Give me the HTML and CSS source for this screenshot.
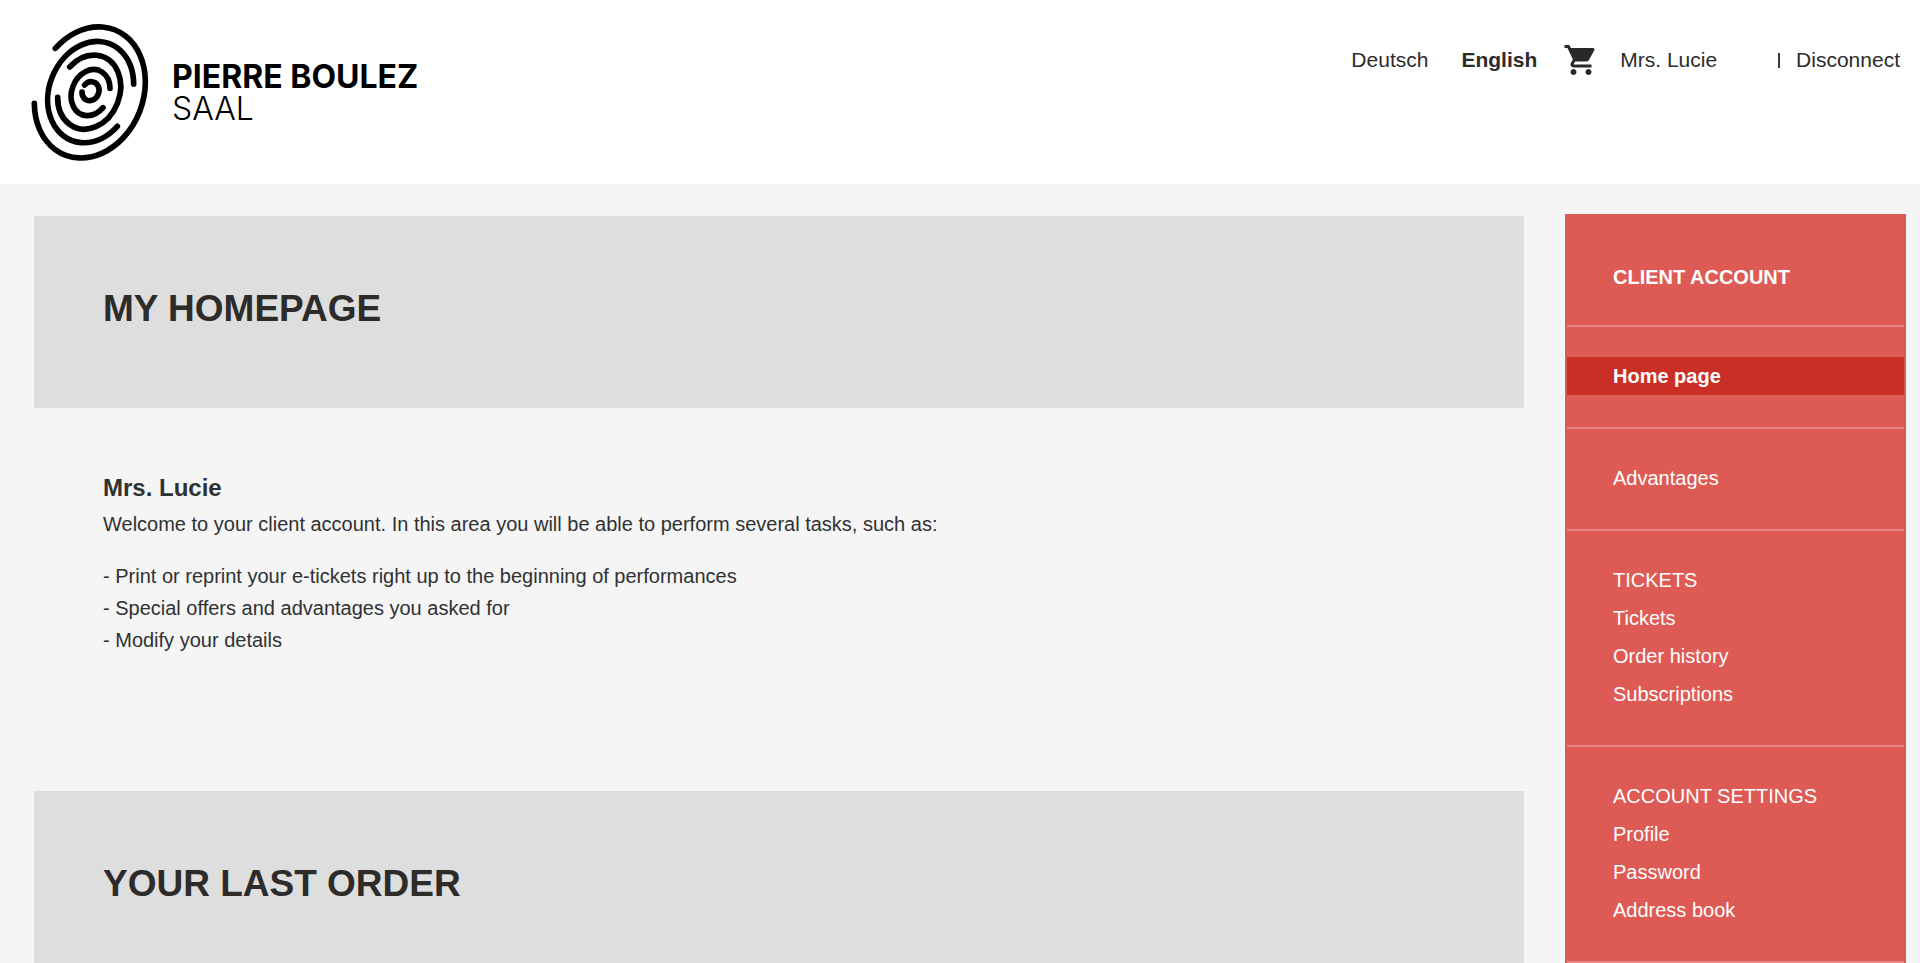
FILE: index.html
```html
<!DOCTYPE html>
<html lang="en">
  <head>
    <meta charset="UTF-8" />
    <meta name="viewport" content="width=device-width, initial-scale=1.0" />
    <title>Pierre Boulez Saal | My homepage</title>
    <link rel="stylesheet" href="styles.css">
  </head>
  <body>
    <!-- top bar with the logo and the account links -->
    <header class="header">
      <a class="logo" href="#">
        <svg class="logo-mark" viewBox="0 0 420 480" aria-hidden="true">
          <path d="M106 115A160 202 22 1 1 43 280" />
          <path d="M341 222A124 156 22 1 0 292 349" />
          <path d="M149 171A91 114 22 1 1 113 262" />
          <path d="M270 235A56 71 22 1 0 249 293" />
          <path d="M194 225A25 29 22 1 1 186 246" />
        </svg>
        <span class="logo-text">
          <strong>PIERRE BOULEZ</strong>
          <span>SAAL</span>
        </span>
      </a>
      <nav class="top-nav">
        <a href="#">Deutsch</a>
        <a class="current" href="#">English</a>
        <a class="cart" href="#" aria-label="Cart">
          <svg viewBox="0 0 24 24" aria-hidden="true">
            <path d="M7 18c-1.1 0-1.99.9-1.99 2S5.9 22 7 22s2-.9 2-2-.9-2-2-2zM1 2v2h2l3.6 7.59-1.35 2.45c-.16.28-.25.61-.25.96 0 1.1.9 2 2 2h12v-2H7.42c-.14 0-.25-.11-.25-.25l.03-.12.9-1.63h7.45c.75 0 1.41-.41 1.75-1.03l3.58-6.49c.08-.14.12-.31.12-.48 0-.55-.45-1-1-1H5.21l-.94-2H1zm16 16c-1.1 0-1.99.9-1.99 2s.89 2 1.99 2 2-.9 2-2-.9-2-2-2z" />
          </svg>
        </a>
        <a class="user" href="#">Mrs. Lucie</a>
        <span class="separator"></span>
        <a href="#">Disconnect</a>
      </nav>
    </header>

    <div class="page">
      <!-- main column -->
      <main class="content">
        <h1 class="banner">MY HOMEPAGE</h1>
        <section class="welcome">
          <h2>Mrs. Lucie</h2>
          <p>Welcome to your client account. In this area you will be able to perform several tasks, such as:</p>
          <ul>
            <li>- Print or reprint your e-tickets right up to the beginning of performances</li>
            <li>- Special offers and advantages you asked for</li>
            <li>- Modify your details</li>
          </ul>
        </section>
        <h1 class="banner">YOUR LAST ORDER</h1>
      </main>

      <!-- client account menu -->
      <aside class="sidebar">
        <h2 class="sidebar-title">CLIENT ACCOUNT</h2>
        <nav>
          <div class="menu-group">
            <a class="active" href="#">Home page</a>
          </div>
          <div class="menu-group">
            <a href="#">Advantages</a>
          </div>
          <div class="menu-group">
            <h3>TICKETS</h3>
            <a href="#">Tickets</a>
            <a href="#">Order history</a>
            <a href="#">Subscriptions</a>
          </div>
          <div class="menu-group">
            <h3>ACCOUNT SETTINGS</h3>
            <a href="#">Profile</a>
            <a href="#">Password</a>
            <a href="#">Address book</a>
          </div>
        </nav>
      </aside>
    </div>
  </body>
</html>
```
FILE: styles.css
```css
* {
  margin: 0;
  padding: 0;
  box-sizing: border-box;
}

body {
  background-color: #f5f5f5;
  color: #2d2c2b;
  font-family: "Liberation Sans", Arial, Helvetica, sans-serif;
  font-size: 20px;
  line-height: 32px;
}

a {
  color: inherit;
  text-decoration: none;
}

/* header */
.header {
  display: flex;
  justify-content: space-between;
  align-items: flex-start;
  height: 184px;
  padding: 10px 20px 0 20px;
  background-color: #fff;
}

.logo {
  display: flex;
  gap: 12px;
  color: #000;
}

.logo-mark {
  width: 140px;
  height: 160px;
  fill: none;
  stroke: #000;
  stroke-width: 17;
  stroke-linecap: round;
}

.logo-text {
  display: flex;
  flex-direction: column;
  padding-top: 51px;
  font-family: Inter, sans-serif;
  font-size: 32px;
  font-weight: 300;
  line-height: 32px;
}

.logo-text strong {
  font-weight: 700;
}

.top-nav {
  display: flex;
  align-items: center;
  padding-top: 32px;
  font-size: 21px;
  line-height: 36px;
}

.current {
  margin-left: 33px;
  font-weight: 700;
}

.cart {
  display: flex;
  margin: 0 21px 0 26px;
}

.cart svg {
  width: 36px;
  height: 36px;
  fill: #2a2928;
}

.separator {
  width: 2px;
  height: 15px;
  margin: 0 16px 0 61px;
  background-color: #3a3939;
}

/* page columns */
.page {
  display: flex;
  align-items: flex-start;
  gap: 41px;
  padding: 30px 14px 0 34px;
}

.content {
  flex: 1;
  padding-top: 2px;
}

.banner {
  height: 192px;
  padding: 71px 69px 0;
  background-color: #dedede;
  font-size: 37px;
  line-height: 44px;
}

.welcome {
  padding: 64px 69px 135px;
  color: #2f3133;
}

.welcome h2 {
  font-size: 24px;
  line-height: 32px;
}

.welcome p {
  margin: 4px 0 20px;
}

.welcome ul {
  list-style: none;
}

/* sidebar */
.sidebar {
  width: 341px;
  border: 2px solid #de5a54;
  background-color: #de5a54;
  color: #fff;
}

.sidebar-title {
  padding: 42px 46px 29px;
  border-bottom: 2px solid #e68782;
  font-size: 20px;
  line-height: 38px;
}

.menu-group {
  padding: 30px 0 32px;
  border-bottom: 2px solid #e68782;
}

.menu-group h3,
.menu-group a {
  display: block;
  padding: 0 46px;
  font-size: 20px;
  font-weight: 400;
  line-height: 38px;
}

.menu-group .active {
  background-color: #ca2f25;
  font-weight: 700;
}
```
